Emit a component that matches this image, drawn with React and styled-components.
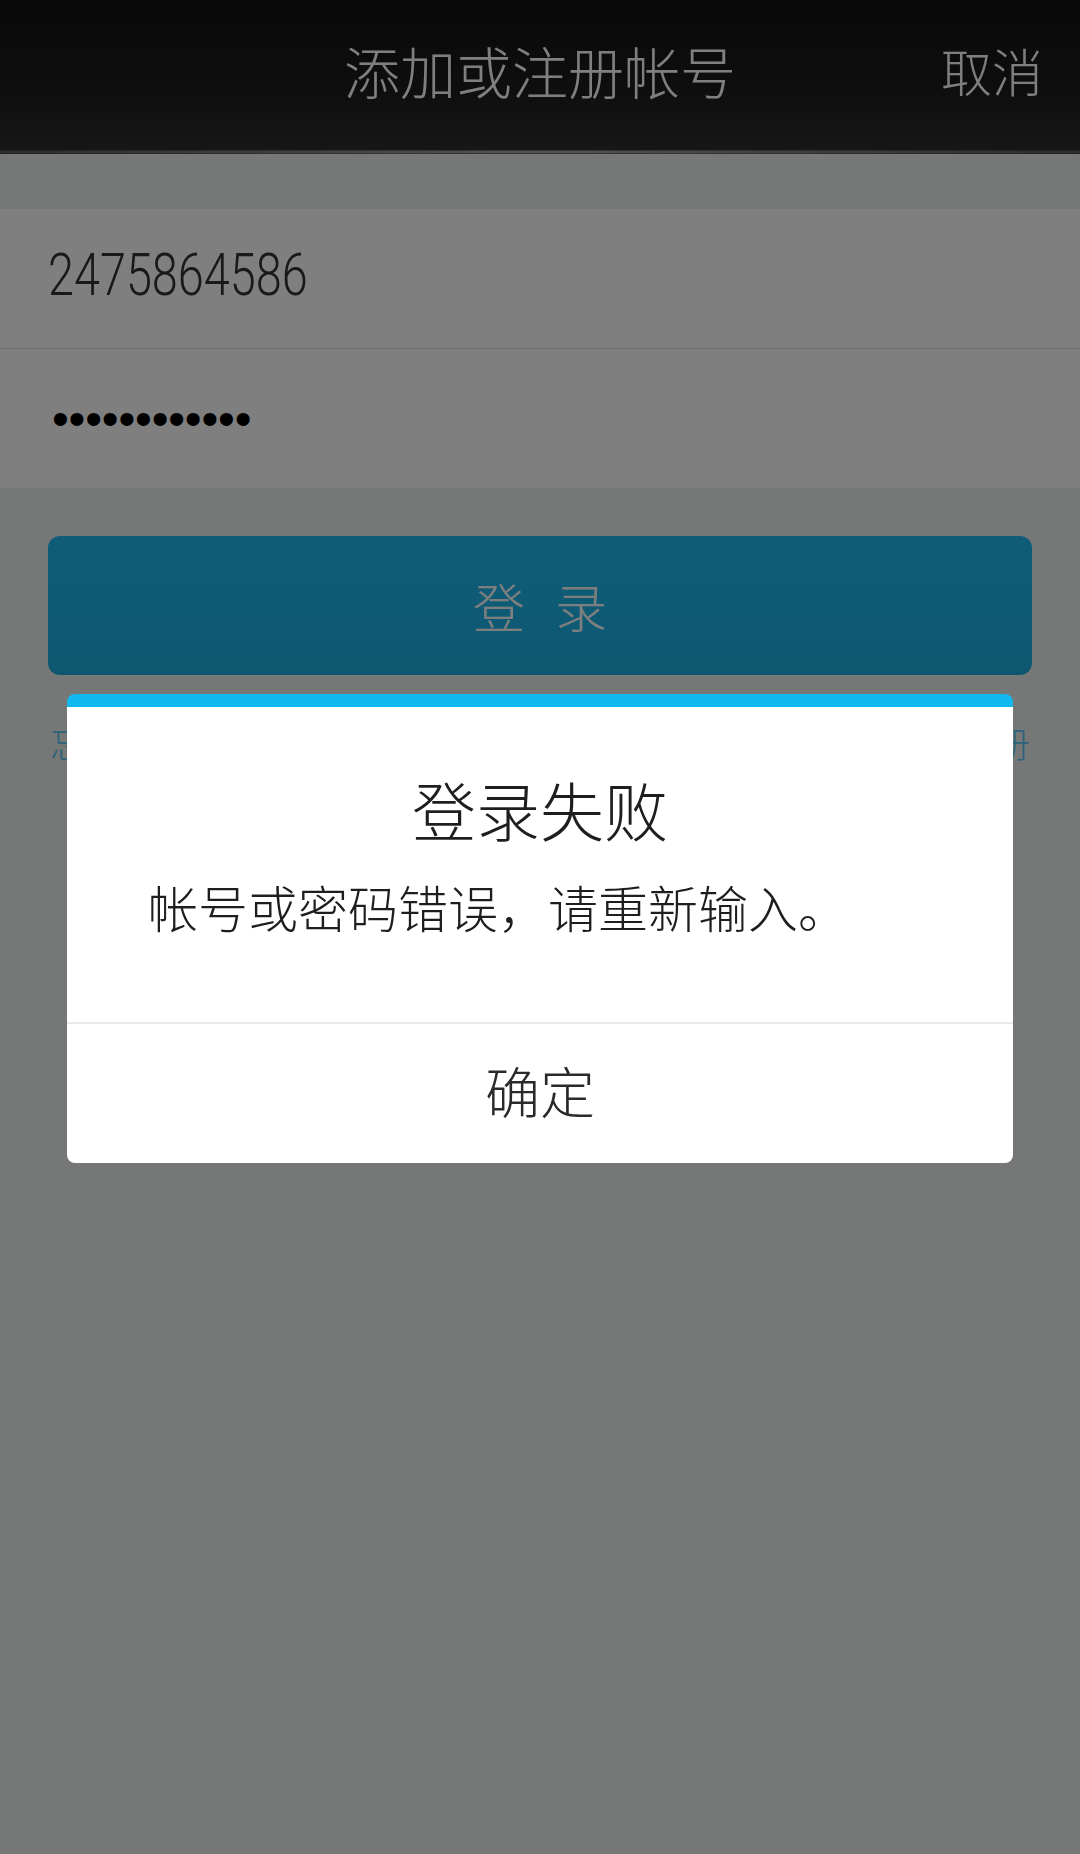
import React from 'react';
import styled, { createGlobalStyle } from 'styled-components';

const GlobalStyle = createGlobalStyle`
  html, body {
    margin: 0;
    padding: 0;
    height: 100%;
  }
  body {
    background: #eceeee;
    font-family: "Noto Sans CJK SC", "Noto Sans", sans-serif;
  }
`;

const Page = styled.div`
  min-height: 100vh;
  display: flex;
  flex-direction: column;
`;

const Header = styled.header`
  position: relative;
  height: 154px;
  display: grid;
  grid-template-columns: 1fr auto 1fr;
  align-items: center;
  background: linear-gradient(180deg, #121212 0%, #1c1c1c 55%, #2e2e2e 100%);

  &::after {
    content: '';
    position: absolute;
    left: 0;
    right: 0;
    bottom: 0;
    height: 4px;
    background: radial-gradient(ellipse at center, #bdbdbd 0%, #7a7a7a 40%, #3a3a3a 100%);
  }
`;

const HeaderTitle = styled.h1`
  grid-column: 2;
  margin: -14px 0 0;
  font-size: 56px;
  font-weight: 300;
  color: #ffffff;
  line-height: 1;
`;

const CancelButton = styled.span`
  grid-column: 3;
  justify-self: end;
  padding-right: 37px;
  margin-top: -14px;
  font-size: 51px;
  font-weight: 300;
  color: #ffffff;
  line-height: 1;
`;

const Form = styled.div`
  margin-top: 55px;
  background: #ffffff;
`;

const Field = styled.div`
  height: 139px;
  display: flex;
  align-items: center;
  padding-left: 48px;
  border-top: ${(p) => (p.$divider ? '1px solid #dedede' : 'none')};
`;

const AccountText = styled.span`
  display: inline-block;
  font-family: Roboto, "Liberation Sans", sans-serif;
  font-weight: 300;
  font-size: 60px;
  color: #333333;
  transform: scaleX(0.78);
  transform-origin: left center;
  margin-top: -8px;
`;

const PasswordText = styled.span`
  font-family: "Liberation Sans", sans-serif;
  font-size: 48px;
  color: #000000;
  letter-spacing: -0.2px;
  margin-left: 4px;
`;

const LoginButton = styled.button`
  margin: 48px 48px 0;
  height: 139px;
  border: none;
  border-radius: 12px;
  background: linear-gradient(180deg, #1ebaf0 0%, #1db5ea 60%, #1aade0 100%);
  color: rgba(255, 255, 255, 0.98);
  font-family: "Noto Sans CJK SC", sans-serif;
  font-weight: 300;
  font-size: 52px;
  letter-spacing: 30px;
  text-indent: 30px;
`;

const LinkRow = styled.div`
  margin-top: 46px;
  padding: 0 50px;
  display: flex;
  justify-content: space-between;
  font-size: 36px;
  font-weight: 300;
  line-height: 43px;
  color: #56c8f4;
`;

const Overlay = styled.div`
  position: fixed;
  inset: 0;
  background: rgba(0, 0, 0, 0.5);
  display: flex;
  justify-content: center;
  align-items: flex-start;
  padding-top: 694px;
`;

const Dialog = styled.div`
  width: 946px;
  background: #ffffff;
  border-top: 13px solid #12b8f0;
  border-radius: 8px;
  overflow: hidden;
`;

const DialogBody = styled.div`
  padding: 63px 0 86px;
`;

const DialogTitle = styled.h2`
  margin: 0;
  text-align: center;
  font-size: 64px;
  font-weight: 300;
  line-height: 77px;
  color: #1e1e1e;
`;

const DialogMessage = styled.p`
  margin: 29px 0 0;
  padding-left: 81px;
  font-size: 50px;
  font-weight: 300;
  line-height: 60px;
  color: #1e1e1e;
`;

const DialogAction = styled.div`
  height: 141px;
  box-sizing: border-box;
  padding-bottom: 10px;
  border-top: 2px solid #e9e9e9;
  display: flex;
  align-items: center;
  justify-content: center;
  font-size: 55px;
  font-weight: 300;
  color: #2a2a2a;
`;

export default function App() {
  return (
    <>
      <GlobalStyle />
      <Page>
        <Header>
          <HeaderTitle>添加或注册帐号</HeaderTitle>
          <CancelButton>取消</CancelButton>
        </Header>
        <Form>
          <Field>
            <AccountText>2475864586</AccountText>
          </Field>
          <Field $divider>
            <PasswordText>••••••••••••</PasswordText>
          </Field>
        </Form>
        <LoginButton>登录</LoginButton>
        <LinkRow>
          <span>忘记密码？</span>
          <span>新用户注册</span>
        </LinkRow>
      </Page>
      <Overlay>
        <Dialog>
          <DialogBody>
            <DialogTitle>登录失败</DialogTitle>
            <DialogMessage>帐号或密码错误，请重新输入。</DialogMessage>
          </DialogBody>
          <DialogAction>确定</DialogAction>
        </Dialog>
      </Overlay>
    </>
  );
}
